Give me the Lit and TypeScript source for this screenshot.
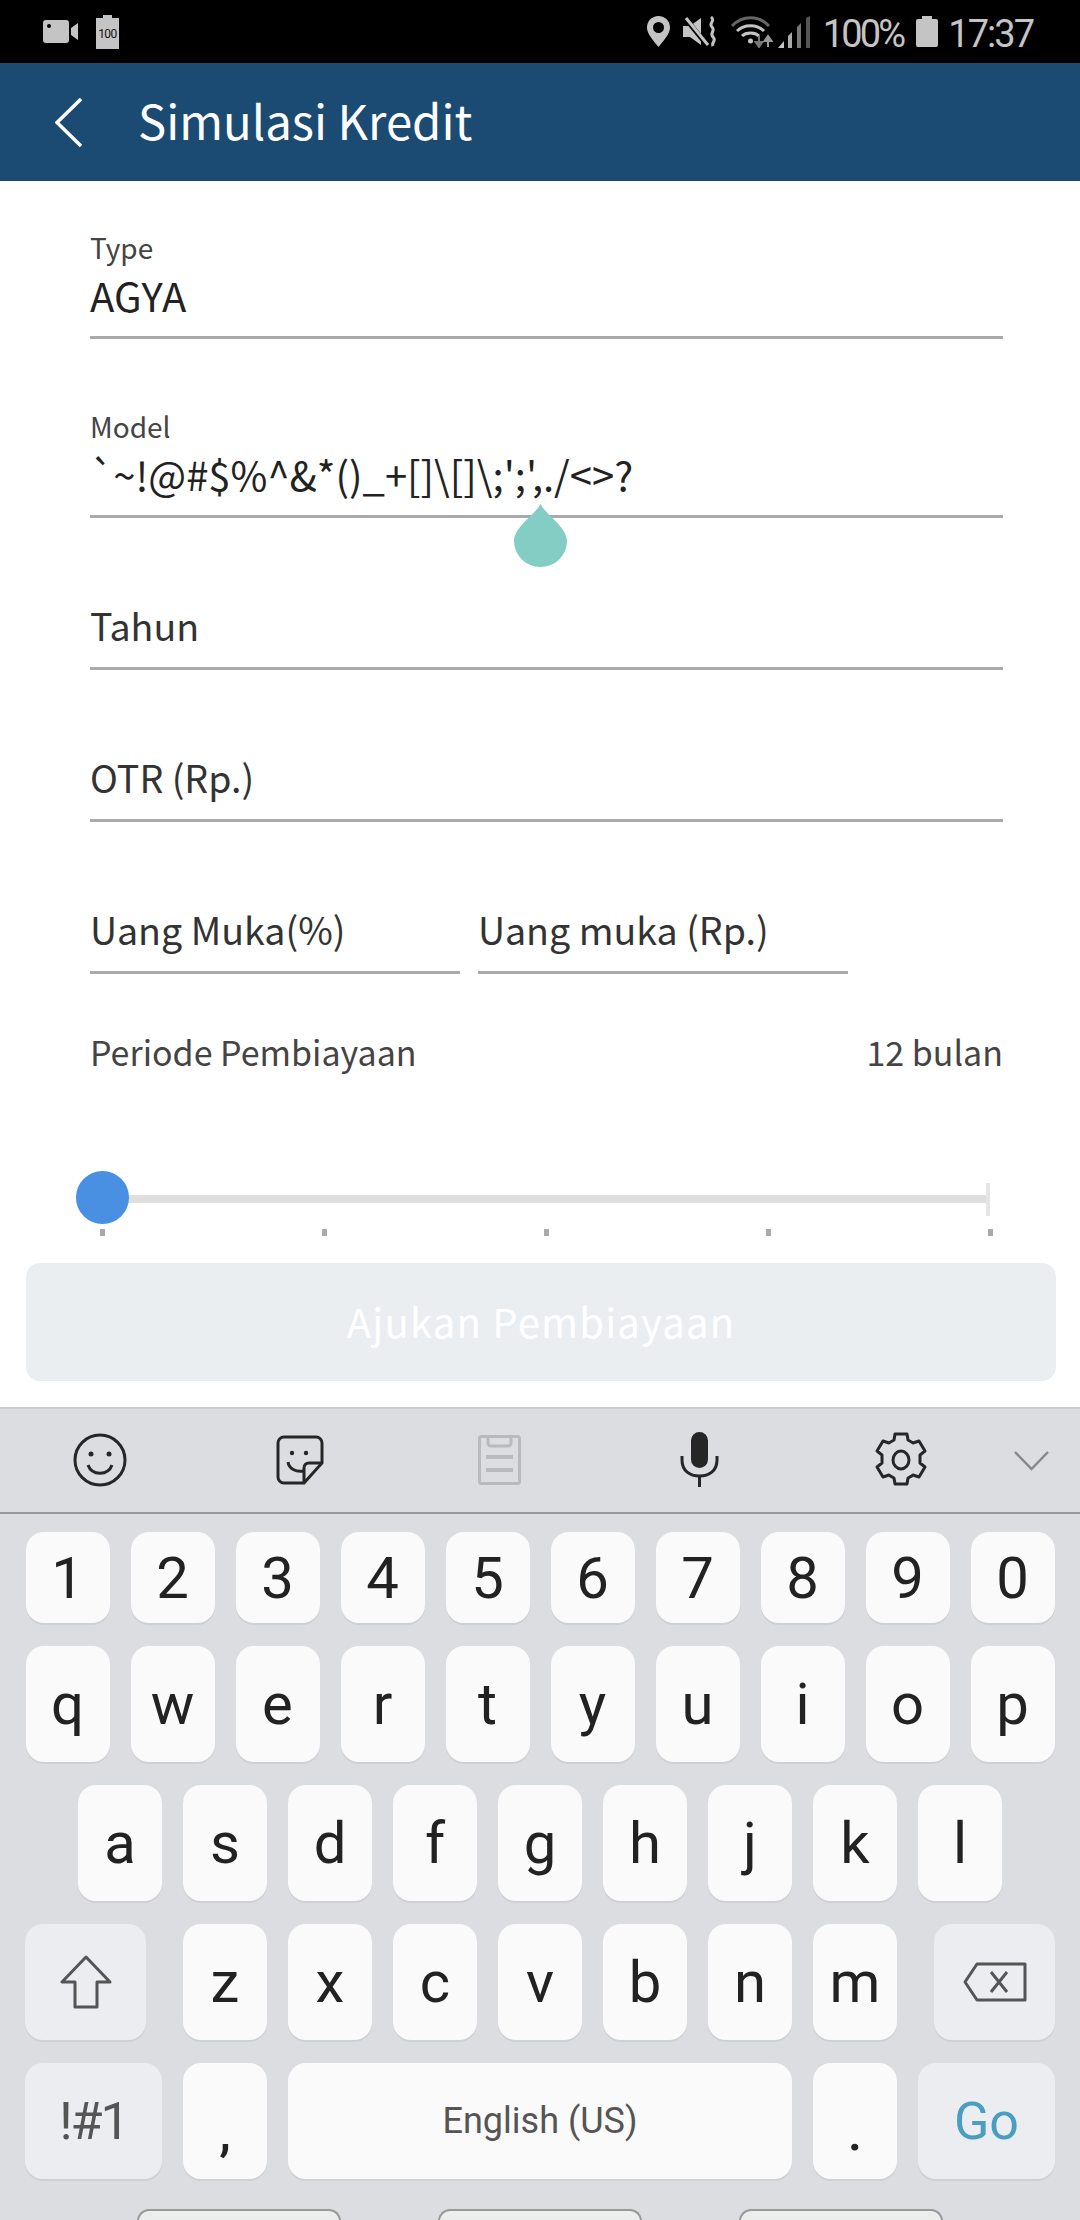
import { LitElement, css, html } from 'lit';
import { customElement } from 'lit/decorators.js';

const ROWS = ['1234567890', 'qwertyuiop', 'asdfghjkl'];

@customElement('app-root')
export class AppRoot extends LitElement {
  static override styles = css`
    :host {
      display: block;
      width: 1080px;
      height: 2220px;
      overflow: hidden;
      position: relative;
      background: #fff;
      font-family: 'Noto Sans CJK KR', 'Noto Sans', sans-serif;
    }
    svg {
      display: block;
      flex: none;
    }

    .status {
      height: 63px;
      background: #000;
      display: flex;
      align-items: center;
      padding: 0 47px 0 43px;
      color: #c4c4c4;
      font: 38px/63px Roboto, sans-serif;
      letter-spacing: -2.8px;
    }
    .status .left {
      display: flex;
      gap: 18px;
      align-items: center;
      margin-right: auto;
    }
    .status span {
      padding-top: 5px;
    }
    .status .pct {
      margin: 0 13px 0 12px;
    }
    .status .time {
      margin-left: 10px;
      letter-spacing: -2px;
    }

    .header {
      height: 118px;
      background: #1b4a72;
      display: flex;
      align-items: center;
      padding-left: 55px;
      color: #fff;
      font-size: 47.3px;
    }
    .header .title {
      margin-left: 56px;
      padding-bottom: 5px;
    }

    .form {
      padding: 50px 77px 0 90px;
      position: relative;
    }
    .field {
      border-bottom: 3px solid #aaa;
      padding-bottom: 19px;
      margin-bottom: 71px;
    }
    .label {
      font-size: 28px;
      line-height: 32px;
      color: #444;
      margin-bottom: 10px;
    }
    .value {
      font-size: 40px;
      line-height: 44px;
      color: #222;
      white-space: nowrap;
    }
    .symbols {
      word-spacing: -10px;
    }
    .plain {
      margin-bottom: 0;
      margin-top: 85px;
      padding-bottom: 20px;
    }
    .plain .value {
      font-size: 37.6px;
      color: #333;
    }
    .pair {
      display: flex;
      gap: 18px;
    }
    .pair .field {
      width: 370px;
    }
    .period {
      display: flex;
      justify-content: space-between;
      font-size: 34px;
      line-height: 44px;
      color: #444;
      margin-top: 56px;
    }

    .drop {
      position: absolute;
      left: 514px;
      top: 323px;
    }

    .slider {
      margin: 97px 0 0 -14px;
      position: relative;
      width: 927px;
      height: 65px;
    }
    .track {
      position: absolute;
      left: 0;
      right: 13px;
      top: 24px;
      height: 8px;
      background: #dfdfdf;
    }
    .cap {
      position: absolute;
      right: 13px;
      top: 12px;
      width: 4px;
      height: 33px;
      background: #e4e4e4;
    }
    .thumb {
      position: absolute;
      left: 0;
      top: 0;
      width: 53px;
      height: 53px;
      border-radius: 50%;
      background: #4a90e2;
    }
    .ticks {
      position: absolute;
      left: 24px;
      width: 893px;
      top: 58px;
      display: flex;
      justify-content: space-between;
    }
    .ticks i {
      width: 5px;
      height: 7px;
      background: #aaa;
    }

    .submit {
      margin: 27px 24px 0 26px;
      height: 118px;
      box-sizing: border-box;
      padding-bottom: 3px;
      border-radius: 14px;
      background: #ebeef1;
      color: #fff;
      font-size: 40px;
      letter-spacing: 1.2px;
      display: flex;
      align-items: center;
      justify-content: center;
    }

    .keyboard {
      position: absolute;
      left: 0;
      right: 0;
      top: 1407px;
      bottom: 0;
      background: #dcdde1;
      font-family: Roboto, sans-serif;
      color: #222;
    }
    .tools {
      height: 103px;
      border-top: 2px solid #ccc;
      border-bottom: 2px solid #999;
      position: relative;
      display: flex;
      align-items: center;
    }
    .tools svg {
      position: absolute;
    }
    .rows {
      padding-top: 18px;
      display: flex;
      flex-direction: column;
      gap: 23px;
    }
    .row {
      display: flex;
      justify-content: center;
      gap: 21px;
    }
    .key {
      width: 84px;
      height: 116px;
      border-radius: 18px;
      background: #fafafa;
      box-shadow: 0 2px 0 #cfd0d4;
      display: flex;
      align-items: center;
      justify-content: center;
      font-size: 58px;
      flex: none;
    }
    .digit {
      height: 91px;
    }
    .fn {
      background: #ecedf0;
    }
    .shift,
    .del {
      width: 121px;
    }
    .shift {
      margin-right: 16px;
    }
    .del {
      margin-left: 16px;
    }
    .sym,
    .go {
      width: 137px;
      font-size: 52px;
    }
    .sym {
      color: #555;
      letter-spacing: -2px;
    }
    .go {
      color: #4a9fc0;
    }
    .space {
      width: 504px;
      font-size: 36px;
      color: #555;
    }
    .punct {
      font-size: 52px;
      font-weight: 500;
      padding-top: 22px;
      box-sizing: border-box;
    }
    .nav {
      display: flex;
      justify-content: center;
      gap: 97px;
      margin-top: 30px;
    }
    .nav i {
      width: 204px;
      height: 20px;
      box-sizing: border-box;
      border: 2px solid #999;
      border-bottom: none;
      border-radius: 12px 12px 0 0;
      background: #eceded;
    }
  `;

  private renderStatus() {
    return html`
      <div class="status">
        <div class="left">
          <svg width="35" height="23" viewBox="0 0 35 23" fill="#c4c4c4">
            <path d="M3 0h20a3 3 0 0 1 3 3v17a3 3 0 0 1-3 3H3a3 3 0 0 1-3-3V3a3 3 0 0 1 3-3zM28 8l7-5v17l-7-5z" />
            <circle cx="6" cy="6" r="2" fill="#000" />
          </svg>
          <svg width="23" height="34" viewBox="0 0 23 34">
            <path d="M7 0h9v3h7v31H0V3h7z" fill="#c4c4c4" />
            <text x="11.500" y="23" text-anchor="middle" font-family="Roboto" font-size="12" letter-spacing="-0.500" fill="#111">100</text>
          </svg>
        </div>
        <svg width="23" height="31" viewBox="0 0 23 31">
          <path fill-rule="evenodd" fill="#c4c4c4" d="M11.500 0C5 0 0 5 0 11.500 0 18 6 24 11.500 31 17 24 23 18 23 11.500 23 5 18 0 11.500 0zm0 6a5.500 5.500 0 1 1 0 11 5.500 5.500 0 0 1 0-11z" />
        </svg>
        <svg style="margin-left:13px" width="34" height="31" viewBox="0 0 34 31" fill="none">
          <path d="M0 10h7l11-8v27L7 21H0z" fill="#c4c4c4" />
          <path d="M2 2l22 27" stroke="#000" stroke-width="5" />
          <path d="M3 2l22 27" stroke="#c4c4c4" stroke-width="3" />
          <path d="M28 1c5 4-3 6 1 10s-3 6 1 10-2 5 0 9" stroke="#c4c4c4" stroke-width="3" />
        </svg>
        <svg style="margin-left:14px" width="80" height="32" viewBox="0 0 80 32" fill="none">
          <path d="M1 10c10-11 27-11 37 0" stroke="#666" stroke-width="3" />
          <path d="M6 15c7-7 20-7 27 0" stroke="#c4c4c4" stroke-width="3" />
          <path d="M11 20c4-4 13-4 17 0" stroke="#c4c4c4" stroke-width="3" />
          <circle cx="19.500" cy="25" r="2.500" fill="#c4c4c4" />
          <path d="M28 20v8M24.500 26l3.500 5 3.500-5z" stroke="#777" stroke-width="2" fill="#777" />
          <path d="M37 31v-8M33.500 25l3.500-5 3.500 5z" stroke="#999" stroke-width="2" fill="#999" />
          <path d="M47 32l6-7v7z" fill="#c4c4c4" />
          <path d="M57 32V20l4-4v16z" fill="#aaa" />
          <path d="M66 32V11l4-4v25z" fill="#777" />
          <path d="M75 32V2l4-2v32z" fill="#555" />
        </svg>
        <span class="pct">100%</span>
        <svg width="22" height="31" viewBox="0 0 22 31" fill="#c4c4c4">
          <path d="M6 0h10v3h4a2 2 0 0 1 2 2v24a2 2 0 0 1-2 2H2a2 2 0 0 1-2-2V5a2 2 0 0 1 2-2h4z" />
        </svg>
        <span class="time">17:37</span>
      </div>
    `;
  }

  private renderForm() {
    return html`
      <div class="form">
        <div class="field">
          <div class="label">Type</div>
          <div class="value">AGYA</div>
        </div>
        <div class="field">
          <div class="label">Model</div>
          <div class="value symbols">\` ~!@#$%^&amp;*()_+[]\\[]\\;';',./&lt;&gt;?</div>
        </div>
        <div class="field plain"><div class="value">Tahun</div></div>
        <div class="field plain"><div class="value">OTR (Rp.)</div></div>
        <div class="pair">
          <div class="field plain"><div class="value">Uang Muka(%)</div></div>
          <div class="field plain"><div class="value">Uang muka (Rp.)</div></div>
        </div>
        <div class="period"><span>Periode Pembiayaan</span><span>12 bulan</span></div>
        <div class="slider">
          <div class="track"></div>
          <div class="cap"></div>
          <div class="thumb"></div>
          <div class="ticks"><i></i><i></i><i></i><i></i><i></i></div>
        </div>
        <svg class="drop" width="53" height="63" viewBox="0 0 53 63">
          <path d="M26.500 0C32 11 53 23 53 37a26.500 26 0 0 1-53 0C0 23 21 11 26.500 0z" fill="#83cdc4" />
        </svg>
      </div>
    `;
  }

  private renderTools() {
    const ink = '#262626';
    return html`
      <div class="tools">
        <svg style="left:73px;top:24px" width="54" height="54" viewBox="0 0 54 54" fill="none" stroke=${ink} stroke-width="3">
          <circle cx="27" cy="27" r="25" />
          <circle cx="18" cy="21" r="2.500" fill=${ink} stroke="none" />
          <circle cx="36" cy="21" r="2.500" fill=${ink} stroke="none" />
          <path d="M15 32c4 11 20 11 24 0" />
        </svg>
        <svg style="left:276px;top:26px" width="48" height="50" viewBox="0 0 48 50" fill="none" stroke=${ink} stroke-width="3">
          <path d="M8 2h32a6 6 0 0 1 6 6v20L28 48H8a6 6 0 0 1-6-6V8a6 6 0 0 1 6-6z" />
          <path d="M46 28H33c-3 0-5 2-5 5v15" />
          <circle cx="16" cy="18" r="2.200" fill=${ink} stroke="none" />
          <circle cx="30" cy="18" r="2.200" fill=${ink} stroke="none" />
          <path d="M12 27c1 7 8 10 15 9" />
        </svg>
        <svg style="left:478px;top:26px" width="43" height="50" viewBox="0 0 43 50" fill="none" stroke="#b9babd" stroke-width="3">
          <rect x="1.500" y="1.500" width="40" height="47" rx="2" />
          <path d="M10 2v6a3 3 0 0 0 3 3h17a3 3 0 0 0 3-3V2" />
          <path d="M8 22h27M8 35h27" stroke-width="4" />
        </svg>
        <svg style="left:680px;top:23px" width="39" height="55" viewBox="0 0 39 55" fill="none" stroke=${ink} stroke-width="3">
          <rect x="11" y="0" width="17" height="36" rx="8.500" fill=${ink} stroke="none" />
          <path d="M2 24v4c0 11 8 16 17.500 16S37 39 37 28v-4" />
          <path d="M19.500 44v11" />
        </svg>
        <svg style="left:874px;top:23px" width="54" height="56" viewBox="0 0 54 56" fill="none" stroke=${ink} stroke-width="3">
          <path d="M21 2h12l1 6c2 1 4 2 5 3l6-2 6 10-5 4v8l5 4-6 10-6-2c-1 1-3 2-5 3l-1 6H21l-1-6c-2-1-4-2-5-3l-6 2-6-10 5-4v-8l-5-4 6-10 6 2c1-1 3-2 5-3z" stroke-linejoin="round" />
          <ellipse cx="27" cy="28" rx="8" ry="9" />
        </svg>
        <svg style="left:1014px;top:42px" width="35" height="20" viewBox="0 0 35 20" fill="none" stroke="#888" stroke-width="2.500">
          <path d="M1 1l16.500 17L34 1" />
        </svg>
      </div>
    `;
  }

  private renderKeyboard() {
    return html`
      <div class="keyboard">
        ${this.renderTools()}
        <div class="rows">
          ${ROWS.map(
            (row, i) => html`
              <div class="row">
                ${[...row].map((ch) => html`<div class="key ${i === 0 ? 'digit' : ''}">${ch}</div>`)}
              </div>
            `,
          )}
          <div class="row">
            <div class="key fn shift">
              <svg width="52" height="54" viewBox="0 0 52 54" fill="none" stroke="#555" stroke-width="3">
                <path d="M26 2L2 27h13v25h22V27h13z" stroke-linejoin="round" />
              </svg>
            </div>
            ${[...'zxcvbnm'].map((ch) => html`<div class="key">${ch}</div>`)}
            <div class="key fn del">
              <svg width="64" height="40" viewBox="0 0 64 40" fill="none" stroke="#555" stroke-width="3">
                <path d="M14 2h48v36H14L2 20z" stroke-linejoin="round" />
                <path d="M28 10l16 20M44 10L28 30" />
              </svg>
            </div>
          </div>
          <div class="row">
            <div class="key fn sym">!#1</div>
            <div class="key punct">,</div>
            <div class="key space">English (US)</div>
            <div class="key punct">.</div>
            <div class="key fn go">Go</div>
          </div>
        </div>
        <div class="nav"><i></i><i></i><i></i></div>
      </div>
    `;
  }

  override render() {
    return html`
      ${this.renderStatus()}
      <div class="header">
        <svg width="27" height="49" viewBox="0 0 27 49" fill="none" stroke="#fff" stroke-width="3.500">
          <path d="M26 1L2 24.500 26 48" />
        </svg>
        <span class="title">Simulasi Kredit</span>
      </div>
      ${this.renderForm()}
      <div class="submit">Ajukan Pembiayaan</div>
      ${this.renderKeyboard()}
    `;
  }
}

declare global {
  interface HTMLElementTagNameMap {
    'app-root': AppRoot;
  }
}
